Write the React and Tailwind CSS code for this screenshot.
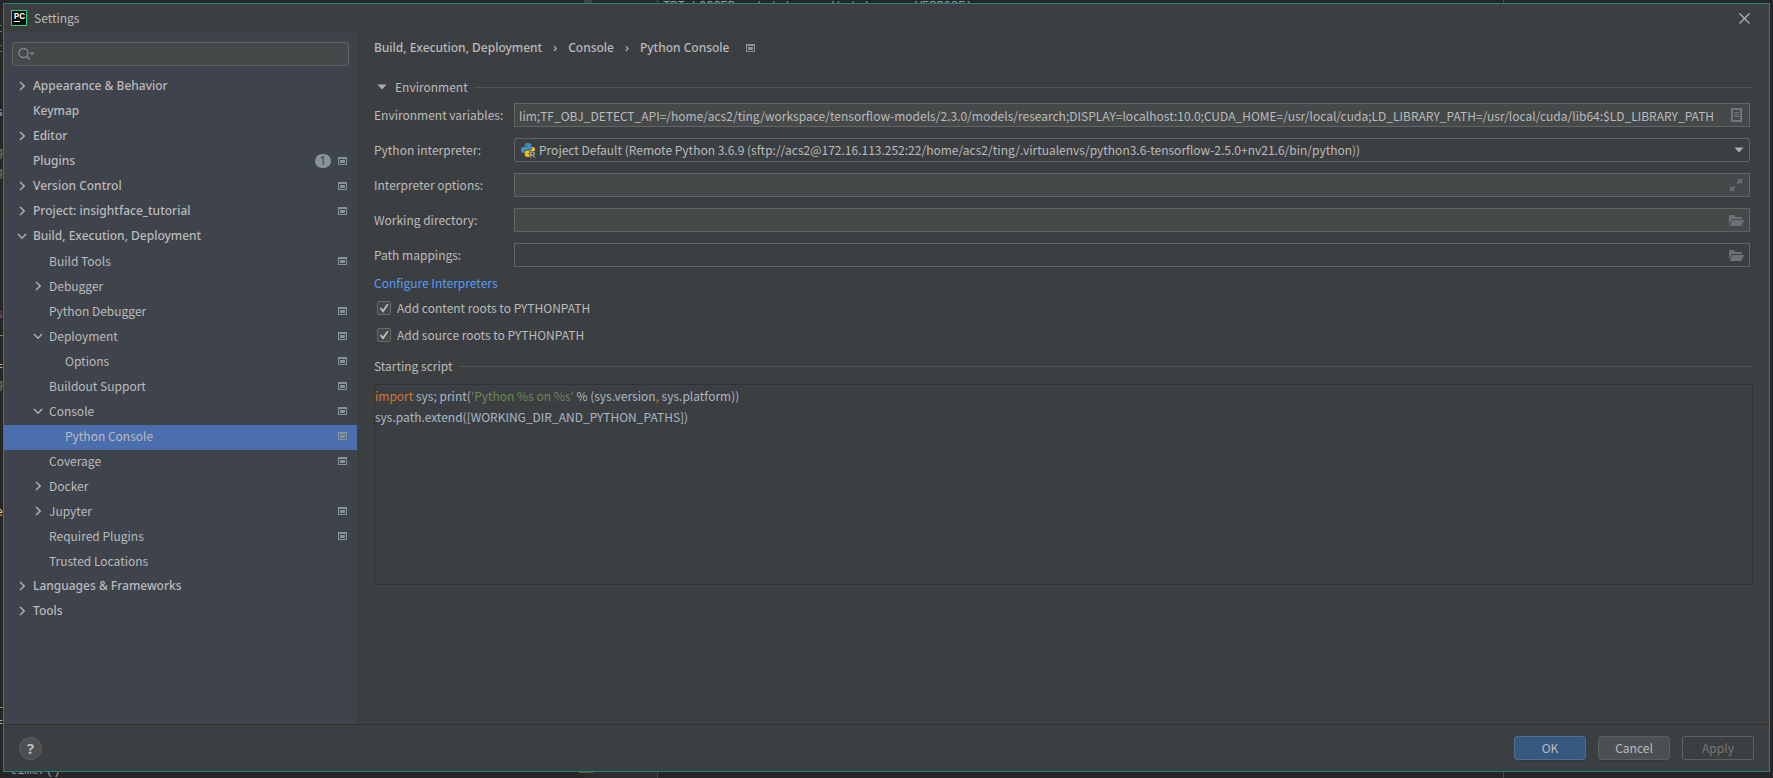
import React, { useState } from "react";

const NAV = [
  { label: "Appearance & Behavior", level: 0, arrow: "right" },
  { label: "Keymap", level: 0 },
  { label: "Editor", level: 0, arrow: "right" },
  { label: "Plugins", level: 0, badge: "1", project: true },
  { label: "Version Control", level: 0, arrow: "right", project: true },
  { label: "Project: insightface_tutorial", level: 0, arrow: "right", project: true },
  { label: "Build, Execution, Deployment", level: 0, arrow: "down" },
  { label: "Build Tools", level: 1, project: true },
  { label: "Debugger", level: 1, arrow: "right" },
  { label: "Python Debugger", level: 1, project: true },
  { label: "Deployment", level: 1, arrow: "down", project: true },
  { label: "Options", level: 2, project: true },
  { label: "Buildout Support", level: 1, project: true },
  { label: "Console", level: 1, arrow: "down", project: true },
  { label: "Python Console", level: 2, project: true, selected: true },
  { label: "Coverage", level: 1, project: true },
  { label: "Docker", level: 1, arrow: "right" },
  { label: "Jupyter", level: 1, arrow: "right", project: true },
  { label: "Required Plugins", level: 1, project: true },
  { label: "Trusted Locations", level: 1 },
  { label: "Languages & Frameworks", level: 0, arrow: "right" },
  { label: "Tools", level: 0, arrow: "right" },
];

const INDENT = ["pl-3", "pl-7", "pl-11"];

function ProjectIcon() {
  return (
    <svg width="9" height="8" viewBox="0 0 9 8" className="shrink-0" fill="#87939a" aria-hidden="true">
      <path fillRule="evenodd" d="M0 0h9v8H0zM1 2v5h7V2z" />
      <path d="M2 3h5v3H2z" />
    </svg>
  );
}

function Arrow({ dir }) {
  return (
    <svg width="12" height="12" viewBox="0 0 12 12" className="shrink-0" fill="none" stroke="#adadad" strokeWidth="1.6" aria-hidden="true">
      {dir === "right" && <path d="M4 2l4.2 4L4 10" />}
      {dir === "down" && <path d="M2 4l4 4.2L10 4" />}
    </svg>
  );
}

function Triangle() {
  return (
    <svg width="10" height="6" viewBox="0 0 10 6" className="shrink-0" aria-hidden="true">
      <path d="M0.5 0.5h9L5 5.5z" fill="#adadad" />
    </svg>
  );
}

function PyCharmLogo() {
  return (
    <div className="flex size-4 flex-col items-start border border-[#21d789] bg-[#0a0a0a] pl-0.5" aria-hidden="true">
      <span className="font-['Inter',sans-serif] text-[8px] leading-[10px] font-bold text-white">PC</span>
      <span className="h-px w-1.5 bg-white" />
    </div>
  );
}

function PythonRemoteIcon() {
  return (
    <svg width="16" height="16" viewBox="0 0 16 16" aria-hidden="true">
      <path d="M7.4 1C5 1 4.7 2 4.7 3v1.4h3.4V5H3.2C1.8 5 1 6.1 1 8s.7 3 2 3h1.3V9.4c0-1.2.9-2 2-2h3.3c1 0 1.8-.8 1.8-1.8V3c0-1.2-.9-2-4-2z" fill="#3e94c9" />
      <path d="M11.7 5v1.6c0 1.1-.9 2-2 2H6.5c-1 0-1.7.8-1.7 1.8V13c0 1.3 1.2 2 3.2 2 2.3 0 3.2-.7 3.2-2v-1.4H8V11h5c1.3 0 2-1 2-3s-.7-3-2-3z" fill="#f5bf0a" />
      <circle cx="6.2" cy="2.8" r=".6" fill="#3c3f41" />
      <path d="M9.5 9H16v7H9.5z" fill="#3c3f41" />
      <path d="M10.7 15.500V10h2.200a1.500 1.500 0 0 1 0 3h-2.200M12.800 13l1.900 2.500" fill="none" stroke="#afb1b3" strokeWidth="1.2" />
    </svg>
  );
}

function ListIcon() {
  return (
    <svg width="11" height="14" viewBox="0 0 11 14" aria-hidden="true">
      <path fillRule="evenodd" d="M0 0h11v14H0zM2 2v10h7V2z" fill="#6e7679" />
      <path d="M3 4.500h5M3 6.500h5M3 8.500h5" stroke="#6e7679" />
    </svg>
  );
}

function ExpandIcon() {
  return (
    <svg width="12" height="12" viewBox="0 0 12 12" fill="#646d71" aria-hidden="true">
      <path d="M7 0h5v5l-1.700-1.700L8.200 5.400 6.600 3.800l2.100-2.100zM5 12H0V7l1.700 1.700 2.100-2.100 1.600 1.600-2.100 2.100z" />
    </svg>
  );
}

function FolderIcon() {
  return (
    <svg width="15" height="11" viewBox="0 0 15 11" fill="#6a7276" aria-hidden="true">
      <path d="M0 0h5l1.500 2H13v2H3L0 9.500z" />
      <path d="M3.500 5H15l-2.500 6H.5z" />
    </svg>
  );
}

function FormRow({ id, label, children }) {
  return (
    <div className="flex items-center">
      <label htmlFor={id} className="w-[140px] shrink-0">{label}</label>
      <div className="relative min-w-0 flex-1">{children}</div>
    </div>
  );
}

function TextField({ id, label, value = "", plain, icon, action }) {
  const [text, setText] = useState(value);
  return (
    <FormRow id={id} label={label}>
      <div className={`flex h-6 items-center border border-[#646464] pr-[5px] ${plain ? "bg-[#3c3f41]" : "bg-[#45494a]"}`}>
        <input
          id={id}
          type="text"
          value={text}
          onChange={(e) => setText(e.target.value)}
          className="h-full min-w-0 flex-1 bg-transparent pl-1 outline-none"
        />
        <button type="button" aria-label={action} className="flex w-4 shrink-0 items-center justify-center">
          {icon}
        </button>
      </div>
    </FormRow>
  );
}

function CheckRow({ id, label }) {
  return (
    <div className="flex h-[27px] items-center gap-1.5 pl-[3px]">
      <span className="relative flex size-3.5 shrink-0">
        <input id={id} type="checkbox" defaultChecked className="peer size-3.5 appearance-none rounded-[2px] border border-[#6b6b6b] bg-[#43494a]" />
        <svg viewBox="0 0 14 14" className="pointer-events-none absolute inset-0 hidden size-3.5 peer-checked:block" aria-hidden="true">
          <path d="M3.500 7l2.500 3.200L10.800 3.200" fill="none" stroke="#bbbbbb" strokeWidth="1.9" />
        </svg>
      </span>
      <label htmlFor={id}>{label}</label>
    </div>
  );
}

const EDGE = [
  ["t", "pt-[22px] text-[#6a8759]"],
  ["t", "pt-[6px] text-[#6a8759]"],
  ["s", "pt-[50px] text-[#a9b7c6]"],
  ["g", "pt-[26px] text-[#6a8759]"],
  ["g", "pt-[6px] text-[#6a8759]"],
  [",", "pt-[22px] text-[#a9b7c6]"],
  ["s", "pt-[92px] text-[#94558d]"],
  ["_", "pt-[2px] text-[#a9b7c6]"],
  ["=", "pt-[22px] text-[#a9b7c6]"],
  ["g", "pt-[4px] text-[#6a8759]"],
  ["e", "pt-[114px] text-[#ffc66d]"],
  ["_", "pt-[176px] text-[#a9b7c6]"],
  ["=", "pt-[6px] text-[#a9b7c6]"],
];

function EditorBackdrop() {
  return (
    <div className="absolute inset-0 overflow-hidden bg-[#262626] font-['Liberation_Mono',monospace] text-[12px] leading-[14px] text-[#8f9aa6]" aria-hidden="true">
      <div className="absolute inset-y-0 left-[584px] w-[74px] border-r border-[#4b4b4b] bg-[#2a2c2e]" />
      <div className="absolute inset-y-0 left-[1503px] w-px bg-[#4b4b4b]" />
      <div className="absolute top-0 left-[584px] h-1 w-2 bg-[#414345]" />
      <div className="absolute bottom-[5px] left-[579px] h-px w-3.5 bg-[#5c5640]" />
      <div className="absolute top-0 left-[663px] whitespace-pre">TRT_LOGGER = trt.Logger(trt.Logger.VERBOSE)</div>
      <div className="absolute bottom-0 left-[10px] whitespace-pre">timer()</div>
      <div className="absolute inset-y-0 left-0 flex w-[3px] flex-col items-end overflow-hidden">
        {EDGE.map(([ch, cls], i) => (
          <span key={i} className={cls}>{ch}</span>
        ))}
      </div>
    </div>
  );
}

export default function App() {
  return (
    <div className="relative flex h-screen flex-col p-[3px] pb-1.5 font-['Noto_Sans_CJK_TC','Noto_Sans',sans-serif] text-[12px] leading-4 text-[#bbbbbb]">
      <EditorBackdrop />

      <main className="relative flex min-h-0 flex-1 flex-col border border-[#24857a] bg-[#3c3f41]">
        <div className="flex min-h-0 flex-1">
          <aside className="flex w-[353px] shrink-0 flex-col bg-[#3e434c]">
            <header className="flex h-7 shrink-0 items-center gap-[7px] bg-[#3c3f41] pl-[7px]">
              <PyCharmLogo />
              <h1>Settings</h1>
            </header>
            <div className="px-2 pt-2.5 pb-[9px]">
              <div className="flex h-6 items-center gap-0.5 rounded-[3px] border border-[#646464] bg-[#45494a] pl-[5px]">
                <svg width="17" height="14" viewBox="0 0 17 14" fill="none" className="shrink-0" aria-hidden="true">
                  <circle cx="5.5" cy="6" r="4.5" stroke="#7f8b91" strokeWidth="1.3" />
                  <path d="M8.800 9.300l3 3.200" stroke="#7f8b91" strokeWidth="1.5" />
                  <path d="M11.500 5.500h5L14 8.300z" fill="#7f8b91" />
                </svg>
                <input type="search" aria-label="Search settings" className="h-full min-w-0 flex-1 bg-transparent outline-none" />
              </div>
            </div>
            <nav aria-label="Settings categories">
              <ul>
                {NAV.map((item) => (
                  <li key={item.label} className="flex">
                    <button
                      type="button"
                      aria-current={item.selected ? "page" : undefined}
                      className={`flex h-[25px] w-full items-center gap-[5px] pr-2.5 pb-[3px] text-left ${INDENT[item.level]} ${item.level === 0 ? "font-['Noto_Sans',sans-serif] font-medium" : ""} ${item.selected ? "bg-[#4b6eaf]" : ""}`}
                    >
                      <Arrow dir={item.arrow} />
                      <span className="flex-1">{item.label}</span>
                      {item.badge && (
                        <span className="mr-0.5 h-3.5 w-4 rounded-full bg-[#87939a] text-center leading-[14px] font-normal text-[#3e434c]">
                          {item.badge}
                        </span>
                      )}
                      {item.project && <ProjectIcon />}
                    </button>
                  </li>
                ))}
              </ul>
            </nav>
          </aside>

          <section className="flex min-w-0 flex-1 flex-col pl-[17px]">
            <div className="flex h-7 shrink-0 items-center justify-end pr-[19px]">
              <button type="button" aria-label="Close">
                <svg width="11" height="11" viewBox="0 0 11 11" fill="none" stroke="#bbbbbb" strokeWidth="1.1" aria-hidden="true">
                  <path d="M.5.5l10 10M10.500.5l-10 10" />
                </svg>
              </button>
            </div>
            <div className="flex h-8 shrink-0 items-center font-['Noto_Sans',sans-serif] font-medium">
              <span>Build, Execution, Deployment</span>
              <span className="w-[26px] text-center">›</span>
              <span>Console</span>
              <span className="w-[26px] text-center">›</span>
              <span className="mr-4">Python Console</span>
              <ProjectIcon />
            </div>

            <div className="mt-[15px] flex items-center pr-4 pl-[3px]">
              <button type="button" className="flex items-center gap-2">
                <Triangle />
                <span>Environment</span>
              </button>
              <span className="ml-1.5 h-px flex-1 bg-[#515355]" />
            </div>

            <div className="mt-2 flex flex-col gap-[11px] pr-[19px]">
              <TextField
                id="env-vars"
                label="Environment variables:"
                value="lim;TF_OBJ_DETECT_API=/home/acs2/ting/workspace/tensorflow-models/2.3.0/models/research;DISPLAY=localhost:10.0;CUDA_HOME=/usr/local/cuda;LD_LIBRARY_PATH=/usr/local/cuda/lib64:$LD_LIBRARY_PATH"
                action="Edit variables"
                icon={<ListIcon />}
              />
              <FormRow id="interpreter" label="Python interpreter:">
                <select id="interpreter" className="block h-6 w-full appearance-none rounded-[3px] border border-[#646464] bg-[#3c3f41] pr-7 pl-6 outline-none">
                  <option>Project Default (Remote Python 3.6.9 (sftp://acs2@172.16.113.252:22/home/acs2/ting/.virtualenvs/python3.6-tensorflow-2.5.0+nv21.6/bin/python))</option>
                </select>
                <span className="pointer-events-none absolute inset-y-0 left-1.5 flex items-center"><PythonRemoteIcon /></span>
                <span className="pointer-events-none absolute inset-y-0 right-1.5 flex items-center"><Triangle /></span>
              </FormRow>
              <TextField id="options" label="Interpreter options:" action="Expand" icon={<ExpandIcon />} />
              <TextField id="workdir" label="Working directory:" action="Browse directory" icon={<FolderIcon />} />
              <TextField id="mappings" label="Path mappings:" plain action="Edit mappings" icon={<FolderIcon />} />
            </div>

            <div className="mt-2 flex flex-col items-start">
              <a href="#interpreters" className="mb-[3px] text-[#589df6]">Configure Interpreters</a>
              <CheckRow id="content-roots" label="Add content roots to PYTHONPATH" />
              <CheckRow id="source-roots" label="Add source roots to PYTHONPATH" />
            </div>

            <div className="mt-2.5 flex items-center pr-4">
              <label htmlFor="script">Starting script</label>
              <span className="ml-1.5 h-px flex-1 bg-[#515355]" />
            </div>
            <div className="pt-2.5 pr-4">
              <div
                id="script"
                role="textbox"
                aria-multiline="true"
                aria-label="Starting script"
                tabIndex={0}
                className="h-[201px] border border-[#323232] leading-[21px] text-[#a9b7c6] outline-none"
              >
                <div>
                  <span className="text-[#cc7832]">import</span> sys; print(<span className="text-[#6a8759]">'Python %s on %s'</span> % (sys.version<span className="text-[#cc7832]">,</span> sys.platform))
                </div>
                <div>sys.path.extend([WORKING_DIR_AND_PYTHON_PATHS])</div>
              </div>
            </div>
          </section>
        </div>

        <footer className="flex h-[47px] shrink-0 items-center justify-between border-t border-[#323232] px-[15px]">
          <button type="button" aria-label="Help" className="size-[23px] rounded-full border border-[#5e6060] bg-[#4c5052] font-['Noto_Sans',sans-serif] text-[15px] leading-5 font-bold">
            ?
          </button>
          <div className="flex gap-3">
            <button type="button" className="h-6 w-[72px] rounded-[3px] border border-[#4c708c] bg-[#365880] shadow-[0_1px_0_#35383a]">OK</button>
            <button type="button" className="h-6 w-[72px] rounded-[3px] border border-[#5e6060] bg-[#4c5052] shadow-[0_1px_0_#35383a]">Cancel</button>
            <button type="button" disabled className="h-6 w-[72px] rounded-[3px] border border-[#5e6060] text-[#777777]">Apply</button>
          </div>
        </footer>
      </main>
    </div>
  );
}
